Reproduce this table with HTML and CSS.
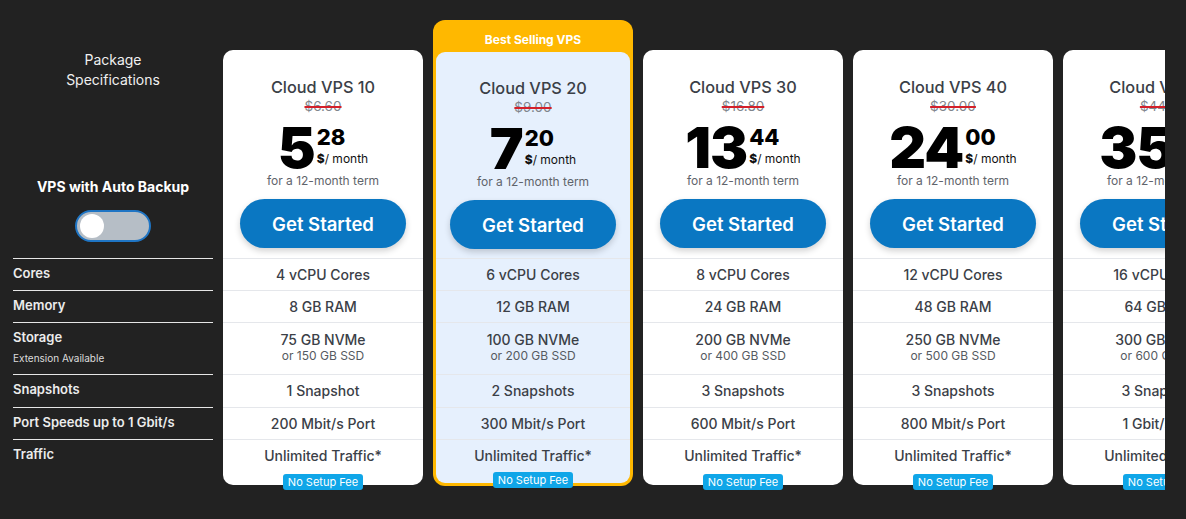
FILE: index.html
```html
<!DOCTYPE html>
<html>
<head>
<meta charset="utf-8">
<link rel="stylesheet" href="styles.css">
</head>
<body>
<div class="viewport">
  <div class="table">
    <div class="specs">
      <div class="specs-head">
        <div class="specs-title">Package<br>Specifications</div>
        <div class="backup-label">VPS with Auto Backup</div>
        <div class="toggle"><span class="knob"></span></div>
      </div>
      <div class="spec-row">Cores</div>
      <div class="spec-row">Memory</div>
      <div class="spec-row tall">Storage<span class="spec-note">Extension Available</span></div>
      <div class="spec-row r33">Snapshots</div>
      <div class="spec-row">Port Speeds up to 1 Gbit/s</div>
      <div class="spec-row last">Traffic</div>
    </div>

    <div class="plan">
      <div class="card">
        <div class="card-head">
          <div class="plan-name">Cloud VPS 10</div>
          <div class="old-price">$6.60</div>
          <div class="price"><span class="price-int">5</span><span class="price-side"><span class="price-dec">28</span><span class="price-unit"><b>$</b>/ month</span></span></div>
          <div class="term">for a 12-month term</div>
          <a class="btn">Get Started</a>
        </div>
        <div class="row">4 vCPU Cores</div>
        <div class="row">8 GB RAM</div>
        <div class="row tall">75 GB NVMe<span class="sub">or 150 GB SSD</span></div>
        <div class="row r33">1 Snapshot</div>
        <div class="row">200 Mbit/s Port</div>
        <div class="row last">Unlimited Traffic*</div>
        <span class="fee">No Setup Fee</span>
      </div>
    </div>

    <div class="plan featured">
      <div class="ribbon">Best Selling VPS</div>
      <div class="card">
        <div class="card-head">
          <div class="plan-name">Cloud VPS 20</div>
          <div class="old-price">$9.00</div>
          <div class="price"><span class="price-int">7</span><span class="price-side"><span class="price-dec">20</span><span class="price-unit"><b>$</b>/ month</span></span></div>
          <div class="term">for a 12-month term</div>
          <a class="btn">Get Started</a>
        </div>
        <div class="row">6 vCPU Cores</div>
        <div class="row">12 GB RAM</div>
        <div class="row tall">100 GB NVMe<span class="sub">or 200 GB SSD</span></div>
        <div class="row r33">2 Snapshots</div>
        <div class="row">300 Mbit/s Port</div>
        <div class="row last">Unlimited Traffic*</div>
        <span class="fee">No Setup Fee</span>
      </div>
    </div>

    <div class="plan">
      <div class="card">
        <div class="card-head">
          <div class="plan-name">Cloud VPS 30</div>
          <div class="old-price">$16.80</div>
          <div class="price"><span class="price-int">13</span><span class="price-side"><span class="price-dec">44</span><span class="price-unit"><b>$</b>/ month</span></span></div>
          <div class="term">for a 12-month term</div>
          <a class="btn">Get Started</a>
        </div>
        <div class="row">8 vCPU Cores</div>
        <div class="row">24 GB RAM</div>
        <div class="row tall">200 GB NVMe<span class="sub">or 400 GB SSD</span></div>
        <div class="row r33">3 Snapshots</div>
        <div class="row">600 Mbit/s Port</div>
        <div class="row last">Unlimited Traffic*</div>
        <span class="fee">No Setup Fee</span>
      </div>
    </div>

    <div class="plan">
      <div class="card">
        <div class="card-head">
          <div class="plan-name">Cloud VPS 40</div>
          <div class="old-price">$30.00</div>
          <div class="price"><span class="price-int">24</span><span class="price-side"><span class="price-dec">00</span><span class="price-unit"><b>$</b>/ month</span></span></div>
          <div class="term">for a 12-month term</div>
          <a class="btn">Get Started</a>
        </div>
        <div class="row">12 vCPU Cores</div>
        <div class="row">48 GB RAM</div>
        <div class="row tall">250 GB NVMe<span class="sub">or 500 GB SSD</span></div>
        <div class="row r33">3 Snapshots</div>
        <div class="row">800 Mbit/s Port</div>
        <div class="row last">Unlimited Traffic*</div>
        <span class="fee">No Setup Fee</span>
      </div>
    </div>

    <div class="plan">
      <div class="card">
        <div class="card-head">
          <div class="plan-name">Cloud VPS 50</div>
          <div class="old-price">$44.00</div>
          <div class="price"><span class="price-int">35</span><span class="price-side"><span class="price-dec">20</span><span class="price-unit"><b>$</b>/ month</span></span></div>
          <div class="term">for a 12-month term</div>
          <a class="btn">Get Started</a>
        </div>
        <div class="row">16 vCPU Cores</div>
        <div class="row">64 GB RAM</div>
        <div class="row tall">300 GB NVMe<span class="sub">or 600 GB SSD</span></div>
        <div class="row r33">3 Snapshots</div>
        <div class="row">1 Gbit/s Port</div>
        <div class="row last">Unlimited Traffic*</div>
        <span class="fee">No Setup Fee</span>
      </div>
    </div>
  </div>
</div>
</body>
</html>
```

FILE: styles.css
```css
* { box-sizing: border-box; }
html, body { margin: 0; padding: 0; }
body {
  background: #222222;
  font-family: Inter, "Noto Sans", sans-serif;
  width: 1186px;
  height: 519px;
  overflow: hidden;
}
.viewport {
  width: 1165px;
  height: 519px;
  overflow: hidden;
  padding: 20px 0 0 13px;
}
.table {
  display: flex;
  gap: 10px;
  align-items: flex-start;
}
.specs {
  flex: 0 0 200px;
  width: 200px;
  color: #f2f2f2;
}
.specs-head {
  height: 238px;
  display: flex;
  flex-direction: column;
  align-items: center;
}
.specs-title {
  margin-top: 30px;
  font-size: 14px;
  line-height: 20px;
  text-align: center;
  color: #f0f0f0;
}
.backup-label {
  margin-top: 88px;
  font-size: 14px;
  font-weight: 700;
  line-height: 18px;
  color: #ffffff;
}
.toggle {
  margin-top: 14px;
  width: 76px;
  height: 32px;
  border-radius: 16px;
  background: #b6bec6;
  border: 2px solid #1f75c4;
  padding: 2px 0 0 3px;
}
.knob {
  display: block;
  width: 24px;
  height: 24px;
  border-radius: 50%;
  background: #ffffff;
}
.spec-row {
  height: 32px;
  border-top: 1px solid #e6e6e6;
  font-size: 13px;
  font-weight: 600;
  line-height: 16px;
  padding-top: 6px;
  color: #ececec;
}
.spec-row.tall { height: 52px; }
.spec-row.r33 { height: 33px; }
.spec-row.last { height: 40px; }
.spec-note {
  display: block;
  font-size: 10px;
  font-weight: 400;
  margin-top: 5px;
  color: #dcdcdc;
}

.plan {
  flex: 0 0 200px;
  width: 200px;
  margin-top: 30px;
}
.plan.featured {
  margin-top: 0;
  background: #ffb800;
  border-radius: 12px;
  padding: 0 3px 3px;
}
.ribbon {
  height: 32px;
  padding-top: 13px;
  text-align: center;
  color: #ffffff;
  font-size: 12px;
  font-weight: 700;
  line-height: 14px;
}
.card {
  position: relative;
  background: #ffffff;
  border-radius: 10px;
  padding-bottom: 13px;
}
.featured .card {
  background: #e6f0fd;
  border-radius: 9px;
  padding-bottom: 11px;
}
.card-head {
  height: 208px;
  display: flex;
  flex-direction: column;
  align-items: center;
  padding-top: 27px;
}
.featured .card-head {
  height: 206px;
  padding-top: 26px;
}
.plan-name {
  font-size: 16.3px;
  font-weight: 500;
  line-height: 20px;
  color: #3b4047;
}
.old-price {
  font-size: 13.5px;
  line-height: 18px;
  color: #80858c;
  text-decoration: line-through;
  text-decoration-color: #d4202a;
  text-decoration-thickness: 1.5px;
}
.price {
  display: flex;
  justify-content: center;
  color: #000000;
  margin-top: 8px;
  height: 50px;
}
.price-int {
  font-size: 57px;
  font-weight: 900;
  line-height: 50px;
  letter-spacing: -1px;
  margin-right: 2px;
}
.price-side {
  display: flex;
  flex-direction: column;
}
.price-dec {
  font-size: 22px;
  font-weight: 800;
  line-height: 22px;
  margin-top: 3px;
}
.price-unit {
  font-size: 12px;
  line-height: 16px;
  margin-top: 3px;
  color: #111;
}
.price-unit b { font-weight: 800; }
.term {
  font-size: 12px;
  line-height: 16px;
  color: #5f646b;
  margin-top: 0;
}
.btn {
  margin-top: 10px;
  width: 166px;
  height: 49px;
  border-radius: 25px;
  background: #0a77c2;
  color: #ffffff;
  font-size: 18.5px;
  font-weight: 600;
  display: flex;
  align-items: center;
  justify-content: center;
  box-shadow: 0 3px 6px rgba(0, 0, 0, 0.18);
}
.row {
  height: 32px;
  border-top: 1px solid #e5e7eb;
  text-align: center;
  font-size: 14px;
  font-weight: 500;
  line-height: 18px;
  padding-top: 7px;
  color: #3b4047;
}
.row.tall { height: 52px; padding-top: 8px; }
.row.r33 { height: 33px; }
.row.last { height: 33px; }
.row .sub {
  display: block;
  font-size: 12px;
  font-weight: 400;
  line-height: 14px;
  color: #555a61;
}
.fee {
  position: absolute;
  left: 50%;
  bottom: -5px;
  transform: translateX(-50%);
  width: 80px;
  height: 16px;
  border-radius: 3px;
  background: #10a6e8;
  color: #ffffff;
  font-size: 11px;
  line-height: 16px;
  text-align: center;
  white-space: nowrap;
}
```
